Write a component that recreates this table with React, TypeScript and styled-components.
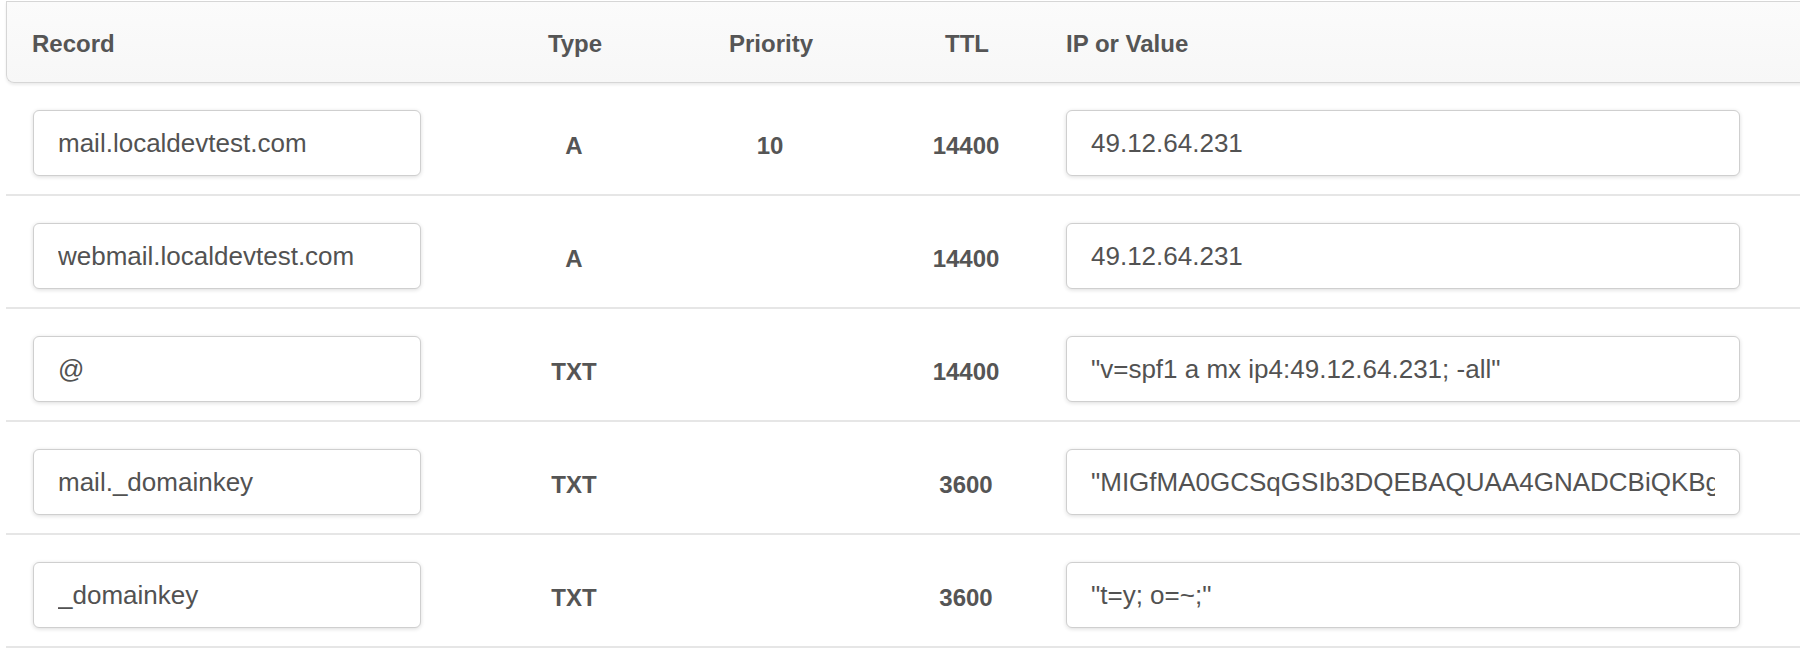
import * as React from "react";
import styled, { createGlobalStyle } from "styled-components";

const GlobalStyle = createGlobalStyle`
  html, body {
    margin: 0;
    padding: 0;
    background: #ffffff;
    overflow: hidden;
  }
  body {
    font-family: "Liberation Sans", Arial, sans-serif;
    color: #555555;
  }
`;

const COLUMNS = "484px 168px 224px 168px 1fr";

const STable = styled.div`
  margin: 1px 0 0 6px;
  width: calc(100% + 20px);
`;

const SHeader = styled.div`
  display: grid;
  grid-template-columns: ${COLUMNS};
  align-items: center;
  height: 80px;
  background: linear-gradient(#fbfbfb, #f7f7f7);
  border: 1px solid #d6d6d6;
  border-right: none;
  border-radius: 0 0 0 8px;
  box-shadow: 0 2px 3px rgba(0, 0, 0, 0.08);
  position: relative;
  z-index: 1;
`;

interface IAlignProps {
  $align?: "left" | "center";
  $indent?: number;
}

const SHeaderCell = styled.div<IAlignProps>`
  padding-top: 4px;
  font-family: "Liberation Sans", Arial, sans-serif;
  font-weight: 700;
  font-size: 24px;
  color: #555555;
  text-align: ${({ $align }) => $align || "center"};
  padding-left: ${({ $indent }) => $indent || 0}px;
`;

const SRow = styled.div`
  display: grid;
  grid-template-columns: ${COLUMNS};
  align-items: center;
  padding: 27px 0 18px;
  border-bottom: 2px solid #e6e6e6;
`;

const SFieldCell = styled.div<{ $indent: number }>`
  padding-left: ${({ $indent }) => $indent}px;
`;

const SCell = styled.div`
  margin-top: 6px;
  font-weight: 700;
  font-size: 24px;
  color: #555555;
  text-align: center;
`;

const SField = styled.input<{ $width: number }>`
  display: block;
  box-sizing: border-box;
  width: ${({ $width }) => $width}px;
  height: 66px;
  padding: 0 24px;
  border: 1px solid #cfcfcf;
  border-radius: 6px;
  background: #ffffff;
  box-shadow: 0 1px 4px rgba(0, 0, 0, 0.14);
  font-family: "Liberation Sans", Arial, sans-serif;
  font-size: 26px;
  color: #525252;
  outline: none;
`;

interface IRecord {
  name: string;
  type: string;
  priority?: string;
  ttl: string;
  value: string;
}

const records: IRecord[] = [
  { name: "mail.localdevtest.com", type: "A", priority: "10", ttl: "14400", value: "49.12.64.231" },
  { name: "webmail.localdevtest.com", type: "A", ttl: "14400", value: "49.12.64.231" },
  { name: "@", type: "TXT", ttl: "14400", value: "\"v=spf1 a mx ip4:49.12.64.231; -all\"" },
  {
    name: "mail._domainkey",
    type: "TXT",
    ttl: "3600",
    value:
      "\"MIGfMA0GCSqGSIb3DQEBAQUAA4GNADCBiQKBgQDUa4xR2kq7mZp0vJ8fLw3TnYcE5sHdGbU1oIqV6rXaN9eKjS\""
  },
  { name: "_domainkey", type: "TXT", ttl: "3600", value: "\"t=y; o=~;\"" }
];

function RecordRow(props: { record: IRecord }) {
  const { record } = props;
  return (
    <SRow>
      <SFieldCell $indent={27}>
        <SField $width={388} readOnly value={record.name} />
      </SFieldCell>
      <SCell>{record.type}</SCell>
      <SCell>{record.priority || ""}</SCell>
      <SCell>{record.ttl}</SCell>
      <SFieldCell $indent={16}>
        <SField $width={674} readOnly value={record.value} />
      </SFieldCell>
    </SRow>
  );
}

export default function App() {
  return (
    <>
      <GlobalStyle />
      <STable>
        <SHeader>
          <SHeaderCell $align="left" $indent={25}>Record</SHeaderCell>
          <SHeaderCell>Type</SHeaderCell>
          <SHeaderCell>Priority</SHeaderCell>
          <SHeaderCell>TTL</SHeaderCell>
          <SHeaderCell $align="left" $indent={15}>IP or Value</SHeaderCell>
        </SHeader>
        {records.map((r) => (
          <RecordRow key={r.name} record={r} />
        ))}
      </STable>
    </>
  );
}
